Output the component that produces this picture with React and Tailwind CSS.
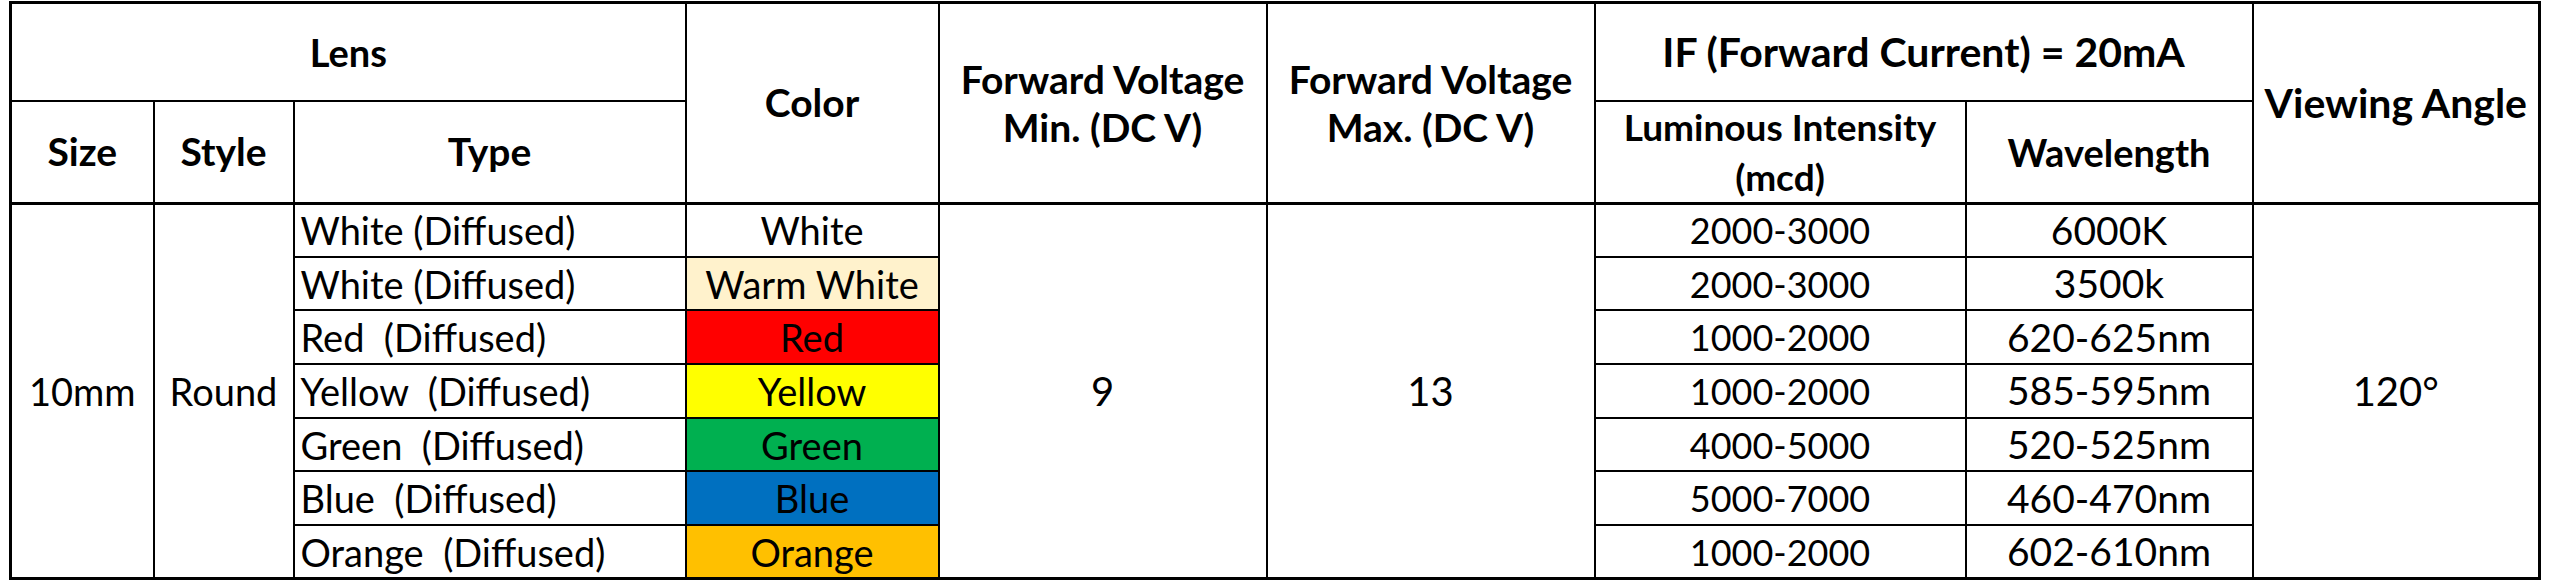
import React from 'react';

// LED spec sheet, 10mm round diffused
const rows = [
  { type: 'White (Diffused)', color: 'White', bg: 'bg-white', lum: '2000-3000', wave: '6000K' },
  { type: 'White (Diffused)', color: 'Warm White', bg: 'bg-[#fff2cc]', lum: '2000-3000', wave: '3500k' },
  { type: 'Red  (Diffused)', color: 'Red', bg: 'bg-[#ff0000]', lum: '1000-2000', wave: '620-625nm' },
  { type: 'Yellow  (Diffused)', color: 'Yellow', bg: 'bg-[#ffff00]', lum: '1000-2000', wave: '585-595nm' },
  { type: 'Green  (Diffused)', color: 'Green', bg: 'bg-[#00b050]', lum: '4000-5000', wave: '520-525nm' },
  { type: 'Blue  (Diffused)', color: 'Blue', bg: 'bg-[#0070c0]', lum: '5000-7000', wave: '460-470nm' },
  { type: 'Orange  (Diffused)', color: 'Orange', bg: 'bg-[#ffc000]', lum: '1000-2000', wave: '602-610nm' },
];

const th = 'border-2 border-black font-bold text-center align-middle p-0';
const td = 'border-2 border-black text-center align-middle p-0';

const App = () => {
  return (
    <div className="w-[2560px] h-[586px] bg-white pt-[1px] pl-[9px] font-['Lato',sans-serif] text-black">
      <table className="table-fixed border-collapse border-[3px] border-black w-[2529px] text-[38px] leading-none">
        <colgroup>
          <col className="w-[143px]" />
          <col className="w-[140px]" />
          <col className="w-[392px]" />
          <col className="w-[253px]" />
          <col className="w-[328px]" />
          <col className="w-[328px]" />
          <col className="w-[371px]" />
          <col className="w-[287px]" />
          <col className="w-[287px]" />
        </colgroup>
        <thead>
          <tr className="h-[98px]">
            <th colSpan={3} className={`${th} text-[38px]`}>Lens</th>
            <th rowSpan={2} className={`${th} text-[39px] border-b-[3px]`}>Color</th>
            <th rowSpan={2} className={`${th} text-[39px] leading-[48px] border-b-[3px]`}>
              Forward Voltage<br />Min. (DC V)
            </th>
            <th rowSpan={2} className={`${th} text-[39px] leading-[48px] border-b-[3px]`}>
              Forward Voltage<br />Max. (DC V)
            </th>
            <th colSpan={2} className={`${th} text-[41px]`}>IF (Forward Current) = 20mA</th>
            <th rowSpan={2} className={`${th} text-[41px] border-b-[3px]`}>Viewing Angle</th>
          </tr>
          <tr className="h-[102px]">
            <th className={`${th} text-[39px] border-b-[3px]`}>Size</th>
            <th className={`${th} text-[39px] border-b-[3px]`}>Style</th>
            <th className={`${th} text-[39px] border-b-[3px]`}>Type</th>
            <th className={`${th} text-[37px] leading-[50px] border-b-[3px]`}>
              Luminous Intensity<br />(mcd)
            </th>
            <th className={`${th} text-[38px] border-b-[3px]`}>Wavelength</th>
          </tr>
        </thead>
        <tbody>
          {rows.map((r, i) => (
            <tr key={i} className="h-[53.7px]">
              {i === 0 && (
                <>
                  <td rowSpan={rows.length} className={td}>10mm</td>
                  <td rowSpan={rows.length} className={td}>Round</td>
                </>
              )}
              <td className={`${td} text-left pl-[6px] whitespace-pre`}>{r.type}</td>
              <td className={`${td} ${r.bg}`}>{r.color}</td>
              {i === 0 && (
                <>
                  <td rowSpan={rows.length} className={`${td} text-[40px]`}>9</td>
                  <td rowSpan={rows.length} className={`${td} text-[40px]`}>13</td>
                </>
              )}
              <td className={`${td} text-[36px]`}>{r.lum}</td>
              <td className={`${td} text-[39px]`}>{r.wave}</td>
              {i === 0 && (
                <td rowSpan={rows.length} className={`${td} text-[40px]`}>120°</td>
              )}
            </tr>
          ))}
        </tbody>
      </table>
    </div>
  );
};

export default App;
